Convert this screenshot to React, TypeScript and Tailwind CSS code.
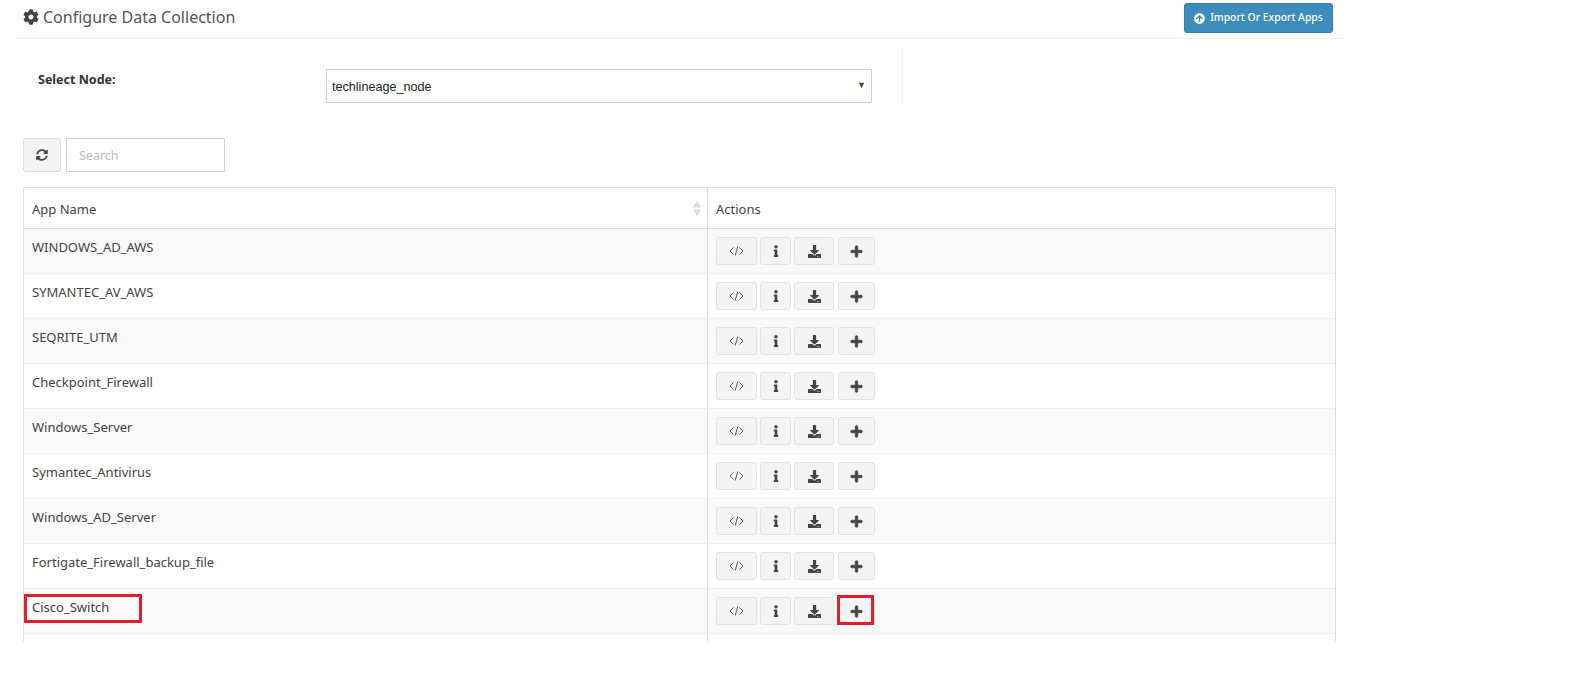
import { FaCog, FaSyncAlt, FaInfo, FaDownload, FaPlus, FaArrowCircleUp } from "react-icons/fa";

const apps = [
  "WINDOWS_AD_AWS",
  "SYMANTEC_AV_AWS",
  "SEQRITE_UTM",
  "Checkpoint_Firewall",
  "Windows_Server",
  "Symantec_Antivirus",
  "Windows_AD_Server",
  "Fortigate_Firewall_backup_file",
  "Cisco_Switch",
];

const btn = "flex h-[28px] items-center justify-center rounded-[3px] border border-[#e3e3e3] bg-[#f4f4f4] text-[#444]";

function Row({ name, index }: { name: string; index: number }) {
  const cisco = name === "Cisco_Switch";
  return (
    <div className={`relative flex h-[45px] border-b border-[#f0f0f0] ${index % 2 === 0 ? "bg-[#f9f9f9]" : "bg-white"}`}>
      <div className="w-[684px] border-r border-[#dddddd] pl-[8px] pt-[9px] text-[13px] leading-[18px] text-[#444]">{name}</div>
      <div className="flex items-start gap-[3px] pl-[8px] pt-[8px]">
        <div className={`${btn} w-[41px]`}>
          <svg width="15" height="10" viewBox="0 0 15 10" fill="none" stroke="#555" strokeWidth="1">
            <path d="M4.500 1.500 1 5l3.500 3.500M10.500 1.500 14 5l-3.500 3.500M8.800 0.500 6.200 9.500" />
          </svg>
        </div>
        <div className={`${btn} w-[31px]`}><FaInfo className="text-[12px]" /></div>
        <div className={`${btn} w-[40px]`}><FaDownload className="text-[13px]" /></div>
        <div className={`${btn} ml-[1px] w-[37px]`}><FaPlus className="text-[13px]" stroke="currentColor" strokeWidth={30} /></div>
      </div>
      {cisco && (
        <>
          <div className="absolute left-0 top-[5px] h-[29px] w-[118px] border-[3px] border-[#e01e2d]" />
          <div className="absolute left-[813px] top-[6px] h-[30px] w-[37px] border-[3px] border-[#e01e2d]" />
        </>
      )}
    </div>
  );
}

export default function App() {
  return (
    <div className="h-[696px] w-[1594px] overflow-hidden bg-white font-['Noto_Sans',sans-serif]">
      <div className="ml-[15px] flex h-[39px] w-[1330px] items-start justify-between border-b border-[#f2f2f2] pl-[8px] pr-[12px]">
        <div className="flex items-center gap-[4px] pt-[6px] text-[16px] leading-[22px] text-[#555]">
          <FaCog className="text-[16px] text-[#444]" />
          <span>Configure Data Collection</span>
        </div>
        <button className="mt-[3px] flex h-[30px] w-[149px] items-center justify-center gap-[5px] rounded-[3px] border border-[#367fa9] bg-[#3c8dbc] text-[10.400px] font-medium text-white">
          <FaArrowCircleUp className="text-[11px]" />
          Import Or Export Apps
        </button>
      </div>

      <div className="flex h-[99px] items-start">
        <div className="ml-[38px] w-[288px] pt-[32px] text-[12.500px] font-bold leading-[18px] text-[#333]">Select Node:</div>
        <div className="mt-[30px] flex h-[34px] w-[546px] items-center justify-between border border-[#d2d2d2] pl-[5px] pr-[5px] font-['Liberation_Sans',sans-serif] text-[12.600px] text-[#222]">
          <span className="pt-[2px]">techlineage_node</span>
          <span className="text-[9px] text-[#444]">▼</span>
        </div>
        <div className="ml-[30px] mt-[9px] h-[57px] border-l border-[#f2f2f2]" />
      </div>

      <div className="ml-[23px] flex gap-[5px]">
        <button className="flex h-[34px] w-[38px] items-center justify-center rounded-[3px] border border-[#dddddd] bg-[#f4f4f4] text-[#444]">
          <FaSyncAlt className="text-[12px]" />
        </button>
        <div className="flex h-[34px] w-[159px] items-center border border-[#d2d2d2] pl-[12px] pt-[2px] text-[12.500px] text-[#bbbbbb]">Search</div>
      </div>

      <div className="ml-[23px] mt-[15px] h-[454px] w-[1313px] overflow-hidden rounded-t-[3px] border-x border-t border-[#dddddd]">
        <div className="flex h-[41px] border-b border-[#dddddd] bg-white text-[13px] text-[#444]">
          <div className="flex w-[684px] items-center justify-between border-r border-[#dddddd] pl-[8px] pr-[6px]">
            <span className="pt-[3px]">App Name</span>
            <svg width="8" height="15" viewBox="0 0 8 15" className="fill-[#dddddd]">
              <path d="M4 0 8 6.500H0z" />
              <path d="M0 8.500h8L4 15z" />
            </svg>
          </div>
          <div className="flex items-center pl-[8px] pt-[3px]">Actions</div>
        </div>
        {apps.map((name, i) => (
          <Row key={name} name={name} index={i} />
        ))}
        <div className="flex h-[20px] bg-white">
          <div className="w-[684px] border-r border-[#dddddd]" />
        </div>
      </div>
    </div>
  );
}
